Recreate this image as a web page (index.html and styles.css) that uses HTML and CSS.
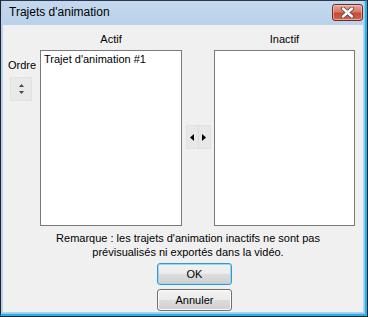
FILE: index.html
```html
<!DOCTYPE html>
<html>
<head>
<meta charset="utf-8">
<link rel="stylesheet" href="styles.css">
</head>
<body>
<div class="window">
  <div class="titlebar">
    <span class="title">Trajets d'animation</span>
    <div class="close">
      <svg width="15" height="11" viewBox="0 0 15 11">
        <path d="M3 1.5 L12 9.5 M12 1.5 L3 9.5" stroke="#5a4a4a" stroke-width="4.2" stroke-linecap="round"/>
        <path d="M3 1.5 L12 9.5 M12 1.5 L3 9.5" stroke="#ffffff" stroke-width="2.4" stroke-linecap="round"/>
      </svg>
    </div>
  </div>
  <div class="client">
    <div class="lists">
      <div></div>
      <div class="label">Actif</div>
      <div></div>
      <div class="label">Inactif</div>
      <div class="order">
        <div class="order-label">Ordre</div>
        <div class="spin">
          <svg width="5" height="3" viewBox="0 0 5 3"><path d="M0 3 L2.5 0 L5 3 Z" fill="#4a4a4a"/></svg>
          <svg width="5" height="3" viewBox="0 0 5 3"><path d="M0 0 L2.5 3 L5 0 Z" fill="#4a4a4a"/></svg>
        </div>
      </div>
      <div class="listbox"><div class="item">Trajet d'animation #1</div></div>
      <div class="mid">
        <div class="move">
          <div class="half"><svg width="4" height="7" viewBox="0 0 4 7"><path d="M4 0 L0 3.5 L4 7 Z" fill="#000"/></svg></div>
          <div class="half right"><svg width="4" height="7" viewBox="0 0 4 7"><path d="M0 0 L4 3.5 L0 7 Z" fill="#000"/></svg></div>
        </div>
      </div>
      <div class="listbox"></div>
    </div>
    <p class="remark">Remarque : les trajets d'animation inactifs ne sont pas<br>prévisualisés ni exportés dans la vidéo.</p>
    <div class="buttons">
      <div class="btn default">OK</div>
      <div class="btn">Annuler</div>
    </div>
  </div>
</div>
</body>
</html>
```
FILE: styles.css
```css
html, body {
  margin: 0;
  padding: 0;
  background: #f0f0f0;
}
body {
  font-family: "Liberation Sans", Arial, sans-serif;
  font-size: 11px;
  color: #000;
}
.window {
  width: 368px;
  height: 317px;
  box-sizing: border-box;
  border: 1px solid #2b3a4a;
  border-left-color: #1c2430;
  background: #b9d1ea;
  display: flex;
  flex-direction: column;
  padding: 0 2px 2px 2px;
  border-right: 3px solid #2ab2e6;
  border-bottom: 3px solid #2ab2e6;
  box-shadow: inset -1px 0 0 #7fd3f1, inset 0 -1px 0 #7fd3f1;
  position: relative;
}
.window::after {
  content: "";
  position: absolute;
  right: -3px;
  bottom: -3px;
  left: -1px;
  top: -1px;
  border-right: 1px solid #1c2430;
  border-bottom: 1px solid #1c2430;
  pointer-events: none;
}
.titlebar {
  height: 24px;
  flex: none;
  display: flex;
  align-items: center;
  background: linear-gradient(#c4d9ef, #b9d1ea);
  padding-left: 6px;
  position: relative;
}
.title {
  font-size: 12px;
  color: #000;
  margin-top: -2px;
}
.close {
  position: absolute;
  right: 0;
  top: 3px;
  width: 31px;
  height: 17px;
  box-sizing: border-box;
  border: 1px solid #6d2a22;
  border-radius: 3px;
  background: linear-gradient(#e8a796 0%, #d77865 45%, #c44a33 55%, #d4644c 100%);
  box-shadow: inset 0 0 0 1px rgba(255,220,210,0.55);
  display: flex;
  align-items: center;
  justify-content: center;
}
.client {
  flex: 1;
  background: #f0f0f0;
  display: flex;
  flex-direction: column;
}
.lists {
  display: grid;
  grid-template-columns: 37px 142px 32px 141px;
  grid-template-rows: 25px 176px;
}
.label {
  text-align: center;
  align-self: end;
  line-height: 13px;
  padding-bottom: 4px;
}
.order {
  display: flex;
  flex-direction: column;
  align-items: flex-start;
}
.order-label {
  margin: 9px 0 0 5px;
  line-height: 13px;
}
.spin {
  margin: 5px 0 0 7px;
  width: 22px;
  height: 24px;
  box-sizing: border-box;
  background: #e9e9e9;
  border: 1px solid #e2e2e2;
  display: flex;
  flex-direction: column;
  align-items: center;
  justify-content: space-around;
  padding: 4px 0;
}
.listbox {
  background: #fff;
  border: 1px solid #7a7a7a;
}
.item {
  padding: 2px 0 0 3px;
  line-height: 13px;
}
.mid {
  display: flex;
  justify-content: center;
  padding-top: 75px;
}
.move {
  width: 25px;
  height: 24px;
  box-sizing: border-box;
  background: #e8e8e8;
  border: 1px solid #e2e2e2;
  display: flex;
}
.half {
  flex: 1;
  display: flex;
  align-items: center;
  justify-content: center;
}
.half.right {
  border-left: 1px solid #dcdcdc;
}
.remark {
  margin: 5px 0 0 0;
  width: 370px;
  text-align: center;
  line-height: 14px;
}
.buttons {
  display: flex;
  flex-direction: column;
  gap: 4px;
  padding-left: 154px;
  margin-top: 4px;
}
.btn {
  width: 75px;
  height: 22px;
  box-sizing: border-box;
  border: 1px solid #707070;
  border-radius: 3px;
  background: linear-gradient(#f2f2f2 0%, #ebebeb 50%, #dddddd 50%, #cfcfcf 100%);
  box-shadow: inset 0 0 0 1px #fcfcfc;
  display: flex;
  align-items: center;
  justify-content: center;
  line-height: 13px;
}
.btn.default {
  border-color: #3399d6;
  box-shadow: inset 0 0 0 1px #9fd5f2;
}
```
